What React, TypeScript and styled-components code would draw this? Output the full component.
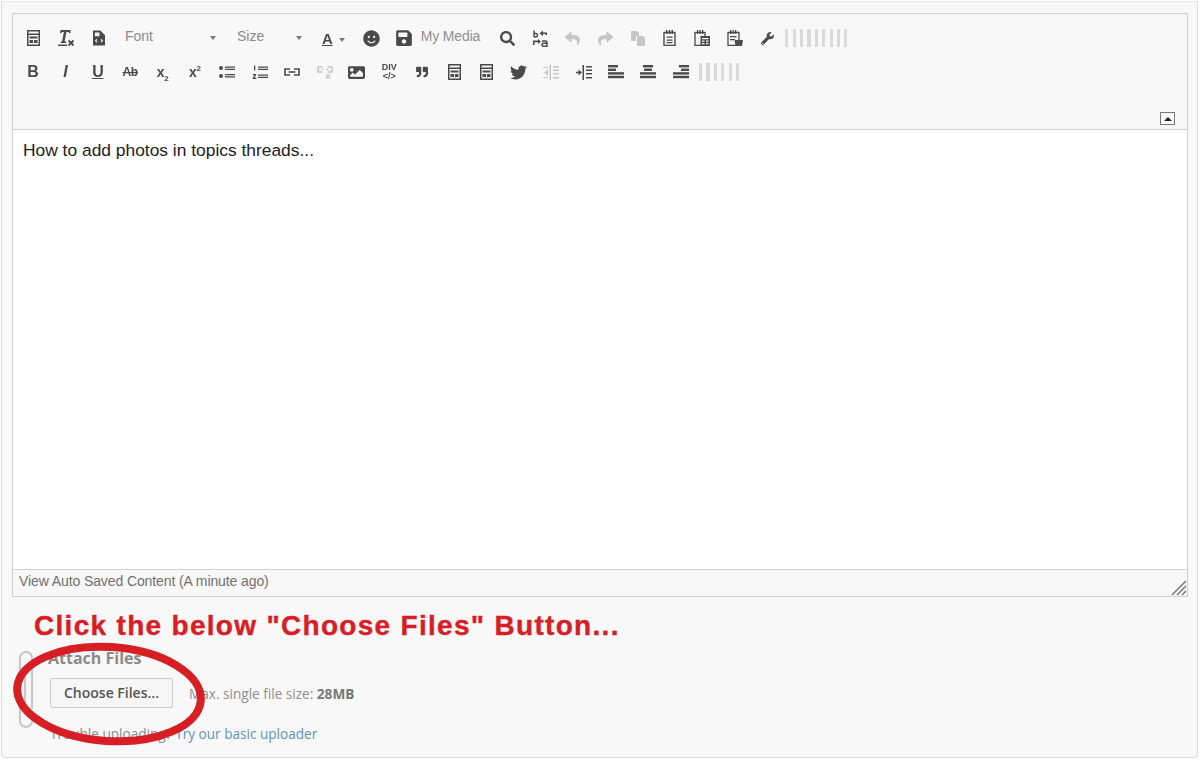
import React from 'react';
import styled, { createGlobalStyle } from 'styled-components';
import { FaImage, FaQuoteRight, FaReply, FaSave, FaSearch, FaShare, FaSmile, FaTwitter, FaWrench } from 'react-icons/fa';

const GlobalStyle = createGlobalStyle`
    html, body {
        margin: 0;
        padding: 0;
        background: #ffffff;
        font-family: "Liberation Sans", Arial, sans-serif;
    }
`;

const Panel = styled.div`
    margin: 1px 1px 0 1px;
    width: 1197px;
    height: 757px;
    box-sizing: border-box;
    padding: 11px 9px 0 10px;
    background: #f8f8f8;
    border: 1px solid #dcdcdc;
    border-top-color: #e6e6e6;
    border-radius: 0 0 4px 4px;
`;

const Editor = styled.div`
    display: flex;
    flex-direction: column;
    width: 1176px;
    height: 584px;
    box-sizing: border-box;
    border: 1px solid #cfcfcf;
`;

const Toolbar = styled.div`
    position: relative;
    height: 116px;
    flex: none;
    box-sizing: border-box;
    padding: 7px 0 0 4.8px;
    background: #f8f8f8;
    border-bottom: 1px solid #cfcfcf;
`;

const ToolRow = styled.div<{ $shift?: number }>`
    display: flex;
    align-items: center;
    height: 34px;
    margin-left: ${(props) => props.$shift ?? 0}px;
`;

const ToolButton = styled.div<{ $muted?: boolean }>`
    display: flex;
    align-items: center;
    justify-content: center;
    flex: none;
    width: 32.4px;
    height: 32px;
    color: ${(props) => (props.$muted ? '#c6c6c6' : '#4a4a4a')};
    filter: blur(0.4px);
    svg {
        display: block;
    }
`;

const GlyphText = styled.span<{ $size?: number; $italic?: boolean; $underline?: boolean; $strike?: boolean }>`
    font-family: "Liberation Sans", Arial, sans-serif;
    font-weight: bold;
    font-size: ${(props) => props.$size ?? 15}px;
    font-style: ${(props) => (props.$italic ? 'italic' : 'normal')};
    text-decoration: ${(props) => (props.$underline ? 'underline' : props.$strike ? 'line-through' : 'none')};
    line-height: 1;
    letter-spacing: -0.3px;
    sub, sup {
        font-size: 8px;
        line-height: 0;
    }
`;

const DivGlyph = styled.span`
    display: block;
    font-weight: bold;
    font-size: 9px;
    line-height: 9px;
    text-align: center;
`;

const Combo = styled.div<{ $width: number; $pad: number }>`
    display: flex;
    align-items: center;
    justify-content: space-between;
    flex: none;
    box-sizing: border-box;
    width: ${(props) => props.$width}px;
    padding: 0 6px 0 ${(props) => props.$pad}px;
    margin-top: -4px;
    font-size: 14px;
    color: #8a8a8a;
`;

const Caret = styled.span`
    display: block;
    width: 0;
    height: 0;
    margin-top: 4px;
    border-left: 3.5px solid transparent;
    border-right: 3.5px solid transparent;
    border-top: 4px solid #777777;
`;

const ColorButton = styled(ToolButton)`
    width: 47px;
    gap: 6px;
    justify-content: flex-start;
    padding-left: 14px;
    box-sizing: border-box;
`;

const MediaLabel = styled.div`
    flex: none;
    width: 72px;
    padding-left: 1px;
    box-sizing: border-box;
    margin-top: -4px;
    font-size: 14px;
    letter-spacing: -0.15px;
    color: #8f8f8f;
`;

const Grip = styled.div`
    display: flex;
    gap: 4.2px;
    margin-left: 2px;
    height: 18px;
    span {
        display: block;
        width: 3.2px;
        background: #dadada;
    }
`;

const Collapse = styled.div`
    position: absolute;
    right: 12px;
    bottom: 4px;
    display: flex;
    align-items: center;
    justify-content: center;
    width: 15px;
    height: 13px;
    box-sizing: border-box;
    background: #fbfbfb;
    border: 1px solid #777777;
    &::after {
        content: '';
        width: 0;
        height: 0;
        border-left: 4px solid transparent;
        border-right: 4px solid transparent;
        border-bottom: 4px solid #222222;
    }
`;

const Content = styled.div`
    flex: 1;
    box-sizing: border-box;
    padding: 10px 10px 0 10px;
    background: #ffffff;
    font-size: 17.4px;
    line-height: 20px;
    color: #222222;
`;

const StatusBar = styled.div`
    position: relative;
    height: 27px;
    flex: none;
    box-sizing: border-box;
    padding: 3px 0 0 6px;
    background: #f8f8f8;
    border-top: 1px solid #cfcfcf;
    font-size: 14px;
    letter-spacing: -0.1px;
    color: #707070;
`;

const ResizeCorner = styled.svg`
    position: absolute;
    right: 0;
    bottom: 0;
`;

const AttachArea = styled.div`
    position: relative;
    height: 159px;
    box-sizing: border-box;
    padding: 51px 0 0 36px;
    font-family: "Open Sans", sans-serif;
`;

const AttachTitle = styled.div`
    height: 20px;
    font-size: 16px;
    line-height: 20px;
    font-weight: 700;
    color: #8a8a8a;
`;

const UploadRow = styled.div`
    display: flex;
    align-items: center;
    gap: 16px;
    margin: 10px 0 0 2px;
`;

const ChooseButton = styled.div`
    width: 123px;
    height: 30px;
    box-sizing: border-box;
    background: #f6f6f6;
    border: 1px solid #cccccc;
    border-radius: 2px;
    font-size: 14px;
    font-weight: 600;
    line-height: 28px;
    text-align: center;
    color: #555555;
`;

const SizeNote = styled.div`
    font-size: 13.6px;
    color: #8f8f8f;
    b {
        font-weight: 700;
        color: #777777;
    }
`;

const HelpLine = styled.div`
    margin: 16px 0 0 2px;
    font-size: 13.6px;
    line-height: 20px;
    color: #8a8a8a;
    a {
        color: #5f93b8;
        text-decoration: none;
    }
`;

const ClickNote = styled.div`
    position: absolute;
    left: 22px;
    top: 13px;
    font-family: "Liberation Sans", Arial, sans-serif;
    font-size: 28px;
    line-height: 32px;
    font-weight: bold;
    letter-spacing: 1.3px;
    -webkit-text-stroke: 0.4px #d81e25;
    white-space: nowrap;
    color: #d81e25;
`;

const PaperClip = styled.svg`
    position: absolute;
    left: 5px;
    top: 54px;
`;

const RedOval = styled.svg`
    position: absolute;
    left: -4px;
    top: 42px;
    pointer-events: none;
`;

const TemplateIcon = () => (
    <svg width="13" height="16" viewBox="0 0 13 16">
        <path fill="currentColor" fillRule="evenodd" d="M0 0h13v16H0zM1.500 1.500v2h10v-2zM1.500 5v9.500h10V5z" />
        <path fill="currentColor" d="M2.500 6.500h8v2h-8zM2.500 10h3.500v3h-3.500zM7 10h3.500v3H7z" />
    </svg>
);

const ClearFormatIcon = () => (
    <svg width="18" height="18" viewBox="0 0 18 18">
        <path fill="currentColor" d="M3.500 1h10v3h-1.500l-.4-1H9.400L7.600 12.500h1.600V14H3.700v-1.500h1.400L6.900 3H4.900l-.4 1H3z" />
        <path fill="currentColor" d="M1 15.500h9V17H1z" />
        <path stroke="currentColor" strokeWidth="1.800" d="M11.500 11.500l5 5m0-5l-5 5" />
    </svg>
);

const SourceDocIcon = () => (
    <svg width="12" height="16" viewBox="0 0 13 16">
        <path fill="currentColor" fillRule="evenodd" d="M0 0h8l5 5v11H0zM2 2v4h5V2zM3.800 9L2 11l1.800 2 .9-.8L3.700 11l1-1.200zM9.200 9l-.9.800 1 1.200-1 1.200.9.800L11 11z" />
    </svg>
);

const SubSupIcon = ({ up }: { up?: boolean }) => (
    <GlyphText $size={14}>x{up ? <sup>2</sup> : <sub>2</sub>}</GlyphText>
);

const BulletListIcon = () => (
    <svg width="16" height="14" viewBox="0 0 16 14">
        <circle cx="2" cy="3" r="2" fill="currentColor" />
        <circle cx="2" cy="11" r="2" fill="currentColor" />
        <path fill="currentColor" d="M6 1.500h10v1.300H6zM6 3.800h10v1.300H6zM6 9h10v1.300H6zM6 11.300h10v1.300H6z" />
    </svg>
);

const NumberListIcon = () => (
    <svg width="16" height="15" viewBox="0 0 16 15">
        <path fill="currentColor" d="M2 .5h1.300v5H2zM.8 9h3.400v1.100L2.400 12.800h1.900V14H.7v-1l1.900-2.800H.8zM6 1.500h10v1.300H6zM6 3.800h10v1.300H6zM6 9.500h10v1.300H6zM6 11.800h10v1.300H6z" />
    </svg>
);

const LinkIcon = () => (
    <svg width="16" height="8" viewBox="0 0 16 8">
        <path fill="none" stroke="currentColor" strokeWidth="1.600" d="M6 1H1v6h5M10 1h5v6h-5M4.500 4h7" />
    </svg>
);

const UnlinkIcon = () => (
    <svg width="16" height="13" viewBox="0 0 16 13">
        <path fill="none" stroke="currentColor" strokeWidth="1.500" d="M5.500 1H1v5h4.500M10.500 1H15v5h-4.500M4.500 3.500h2M9.500 3.500h2" />
        <path stroke="currentColor" strokeWidth="1.500" d="M9 8.500l4 4m0-4l-4 4" />
    </svg>
);

const CopyIcon = () => (
    <svg width="14" height="15" viewBox="0 0 14 15">
        <path fill="currentColor" d="M0 0h6l2 2v3H5v5H0zM6 5h6l2 2v8H6z" />
    </svg>
);

const PasteIcon = () => (
    <svg width="13" height="16" viewBox="0 0 13 16">
        <path fill="none" stroke="currentColor" strokeWidth="1.400" d="M1 2.500h11v13H1z" />
        <path fill="currentColor" d="M3 0h1.500v4H3zM5.800 0h1.500v4H5.800zM8.500 0H10v4H8.500zM3.500 6.500h6v1.300h-6zM3.500 9.500h6v1.300h-6zM3.500 12h6v1.300h-6z" />
    </svg>
);

const PasteTextIcon = () => (
    <svg width="16" height="16" viewBox="0 0 16 16">
        <path fill="none" stroke="currentColor" strokeWidth="1.300" d="M1 2.500h10v13H1z" />
        <path fill="currentColor" d="M3 0h1.300v4H3zM5.500 0h1.300v4H5.500zM8 0h1.300v4H8zM6.500 6H16v10H6.500z" />
        <path fill="#f8f8f8" d="M8 8h6.500v1.200H8zM8 10.500h2.500v1.200H8zM12 10.500h2.500v1.200H12zM8 13h2.500v1.200H8zM12 13h2.500v1.200H12z" />
    </svg>
);

const PasteWordIcon = () => (
    <svg width="16" height="16" viewBox="0 0 16 16">
        <path fill="none" stroke="currentColor" strokeWidth="1.300" d="M1 2.500h11v13H1z" />
        <path fill="currentColor" d="M3 0h1.300v4H3zM5.500 0h1.300v4H5.500zM8 0h1.300v4H8zM3 6h6.500v1.200H3zM3 9h5v1.200H3zM7.500 10H16l-1 6H8.500z" />
    </svg>
);

const ReplaceIcon = () => (
    <svg width="17" height="17" viewBox="0 0 17 17">
        <path fill="none" stroke="currentColor" strokeWidth="1.500" d="M2 .5v6.500M2 3.500h1.800a1.500 1.500 0 0 1 0 3.500H2" />
        <path fill="none" stroke="currentColor" strokeWidth="1.500" d="M10 11h3.500a1.500 1.500 0 0 1 1.500 1.500v3.800h-3.500a1.500 1.500 0 0 1 0-3h3.500" />
        <path fill="currentColor" d="M7.500 3.500L11 .5v2h4v2.500h-1.500V4H11v2zM1 10.500h5V9l3 2.500L6 14v-1.700H2.500V15H1z" />
    </svg>
);

const IndentIcon = ({ out }: { out?: boolean }) => (
    <svg width="16" height="15" viewBox="0 0 16 15">
        <path fill="currentColor" d="M6.500 0H8v15H6.500zM10 1h6v1.500h-6zM10 4.500h6V6h-6zM10 8h6v1.500h-6zM10 12h6v1.500h-6z" />
        {out ? (
            <path fill="currentColor" d="M5 4.500v6L1 7.500zM0 2h5v1H0zM0 12h5v1H0z" />
        ) : (
            <path fill="currentColor" d="M0 6.700h2.500V4.500L6 7.500l-3.500 3V8.200H0z" />
        )}
    </svg>
);

const AlignIcon = ({ side }: { side: 'left' | 'center' | 'right' }) => {
    const start = (w: number) => (side === 'left' ? 0 : side === 'center' ? (16 - w) / 2 : 16 - w);
    return (
        <svg width="16" height="14" viewBox="0 0 16 14">
            {[10, 8, 16, 16].map((w, i) => (
                <rect key={i} x={start(w)} y={i * 3.6} width={w} height="2.400" fill="currentColor" />
            ))}
        </svg>
    );
};

const Bars = ({ count }: { count: number }) => (
    <Grip>
        {Array.from({ length: count }, (_, i) => (
            <span key={i} />
        ))}
    </Grip>
);

export default function App() {
    return (
        <>
            <GlobalStyle />
            <Panel>
                <Editor>
                    <Toolbar>
                        <ToolRow>
                            <ToolButton><TemplateIcon /></ToolButton>
                            <ToolButton><ClearFormatIcon /></ToolButton>
                            <ToolButton><SourceDocIcon /></ToolButton>
                            <Combo $width={107} $pad={10}>Font<Caret /></Combo>
                            <Combo $width={86} $pad={15}>Size<Caret /></Combo>
                            <ColorButton>
                                <GlyphText $size={15} $underline>A</GlyphText>
                                <Caret />
                            </ColorButton>
                            <ToolButton><FaSmile size={17} /></ToolButton>
                            <ToolButton><FaSave size={18} /></ToolButton>
                            <MediaLabel>My Media</MediaLabel>
                            <ToolButton><FaSearch size={15} /></ToolButton>
                            <ToolButton><ReplaceIcon /></ToolButton>
                            <ToolButton $muted><FaReply size={15} /></ToolButton>
                            <ToolButton $muted><FaShare size={15} /></ToolButton>
                            <ToolButton $muted><CopyIcon /></ToolButton>
                            <ToolButton><PasteIcon /></ToolButton>
                            <ToolButton><PasteTextIcon /></ToolButton>
                            <ToolButton><PasteWordIcon /></ToolButton>
                            <ToolButton><FaWrench size={13} /></ToolButton>
                            <Bars count={9} />
                        </ToolRow>
                        <ToolRow $shift={-1}>
                            <ToolButton><GlyphText $size={16}>B</GlyphText></ToolButton>
                            <ToolButton><GlyphText $size={16} $italic>I</GlyphText></ToolButton>
                            <ToolButton><GlyphText $size={16} $underline>U</GlyphText></ToolButton>
                            <ToolButton><GlyphText $size={12} $strike>Ab</GlyphText></ToolButton>
                            <ToolButton><SubSupIcon /></ToolButton>
                            <ToolButton><SubSupIcon up /></ToolButton>
                            <ToolButton><BulletListIcon /></ToolButton>
                            <ToolButton><NumberListIcon /></ToolButton>
                            <ToolButton><LinkIcon /></ToolButton>
                            <ToolButton $muted><UnlinkIcon /></ToolButton>
                            <ToolButton><FaImage size={17} /></ToolButton>
                            <ToolButton><DivGlyph>DIV<br />&lt;/&gt;</DivGlyph></ToolButton>
                            <ToolButton><FaQuoteRight size={12} /></ToolButton>
                            <ToolButton><TemplateIcon /></ToolButton>
                            <ToolButton><TemplateIcon /></ToolButton>
                            <ToolButton><FaTwitter size={17} /></ToolButton>
                            <ToolButton $muted><IndentIcon out /></ToolButton>
                            <ToolButton><IndentIcon /></ToolButton>
                            <ToolButton><AlignIcon side="left" /></ToolButton>
                            <ToolButton><AlignIcon side="center" /></ToolButton>
                            <ToolButton><AlignIcon side="right" /></ToolButton>
                            <Bars count={6} />
                        </ToolRow>
                        <Collapse />
                    </Toolbar>
                    <Content>How to add photos in topics threads...</Content>
                    <StatusBar>
                        View Auto Saved Content (A minute ago)
                        <ResizeCorner width="16" height="16" viewBox="0 0 16 16">
                            <path stroke="#777777" strokeWidth="1.500" d="M1 15L15 1M6 15L15 6M11 15l4-4" />
                        </ResizeCorner>
                    </StatusBar>
                </Editor>
                <AttachArea>
                    <AttachTitle>Attach Files</AttachTitle>
                    <UploadRow>
                        <ChooseButton>Choose Files...</ChooseButton>
                        <SizeNote>Max. single file size: <b>28MB</b></SizeNote>
                    </UploadRow>
                    <HelpLine>Trouble uploading? <a href="#">Try our basic uploader</a></HelpLine>
                    <PaperClip width="20" height="78" viewBox="0 0 20 78">
                        <path fill="none" stroke="#c8c8c8" strokeWidth="2.200" d="M15 58V7a6 6 0 0 0-12 0v63a6 6 0 0 0 12 0V64M8 62V14" />
                    </PaperClip>
                    <ClickNote>Click the below "Choose Files" Button...</ClickNote>
                    <RedOval width="204" height="112" viewBox="0 0 204 112">
                        <ellipse cx="101" cy="55" rx="92" ry="47" fill="none" stroke="#d81e25" strokeWidth="8" transform="rotate(4 101 55)" />
                    </RedOval>
                </AttachArea>
            </Panel>
        </>
    );
}
